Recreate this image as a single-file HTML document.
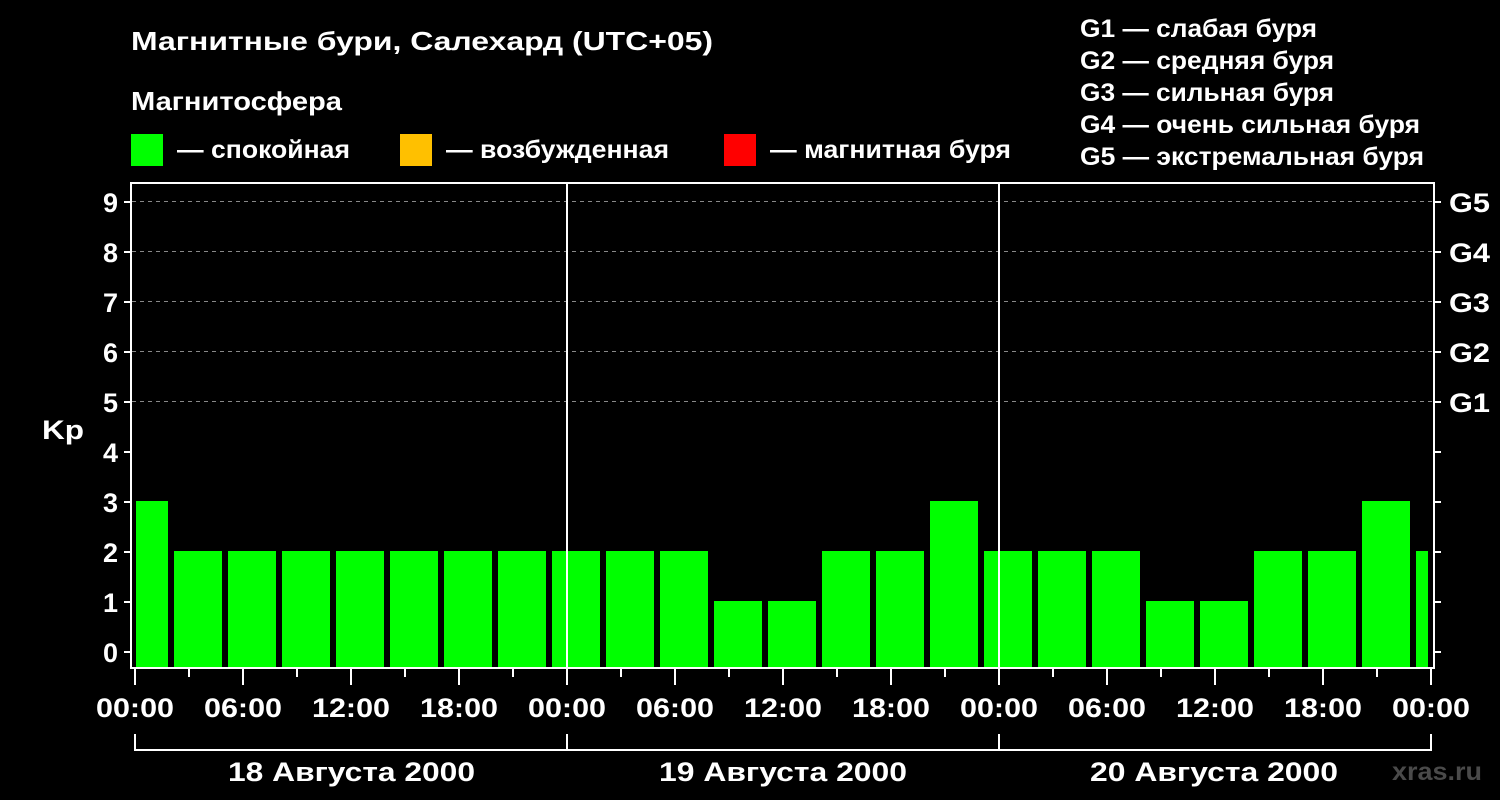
<!DOCTYPE html>
<html><head><meta charset="utf-8"><style>
html,body{margin:0;padding:0;background:#000;width:1500px;height:800px;overflow:hidden}
svg{display:block}
text{font-family:"Liberation Sans",Arial,sans-serif;font-weight:bold;fill:#fff}
</style></head><body>
<svg width="1500" height="800" viewBox="0 0 1500 800" xmlns="http://www.w3.org/2000/svg">
<rect width="1500" height="800" fill="#000"/>
<text x="131" y="50" font-size="26" textLength="582" lengthAdjust="spacingAndGlyphs">Магнитные бури, Салехард (UTC+05)</text>
<text x="131" y="110" font-size="26" textLength="211" lengthAdjust="spacingAndGlyphs">Магнитосфера</text>
<rect x="131" y="134" width="32" height="32" fill="#00ff00"/>
<text x="177" y="158" font-size="25" textLength="173" lengthAdjust="spacingAndGlyphs">— спокойная</text>
<rect x="400" y="134" width="32" height="32" fill="#ffc000"/>
<text x="446" y="158" font-size="25" textLength="223" lengthAdjust="spacingAndGlyphs">— возбужденная</text>
<rect x="724" y="134" width="32" height="32" fill="#ff0000"/>
<text x="770" y="158" font-size="25" textLength="241" lengthAdjust="spacingAndGlyphs">— магнитная буря</text>
<g font-size="25">
<text x="1080" y="37" textLength="237" lengthAdjust="spacingAndGlyphs">G1 — слабая буря</text>
<text x="1080" y="69" textLength="254" lengthAdjust="spacingAndGlyphs">G2 — средняя буря</text>
<text x="1080" y="101" textLength="254" lengthAdjust="spacingAndGlyphs">G3 — сильная буря</text>
<text x="1080" y="133" textLength="340" lengthAdjust="spacingAndGlyphs">G4 — очень сильная буря</text>
<text x="1080" y="165" textLength="344" lengthAdjust="spacingAndGlyphs">G5 — экстремальная буря</text>
</g>
<g stroke="#888" stroke-width="1" stroke-dasharray="4,4">
<line x1="132" y1="201.5" x2="1434" y2="201.5"/>
<line x1="132" y1="251.5" x2="1434" y2="251.5"/>
<line x1="132" y1="301.5" x2="1434" y2="301.5"/>
<line x1="132" y1="351.5" x2="1434" y2="351.5"/>
<line x1="132" y1="401.5" x2="1434" y2="401.5"/>
</g>
<g fill="#00ff00">
<rect x="136" y="501" width="32" height="167"/>
<rect x="174" y="551" width="48" height="117"/>
<rect x="228" y="551" width="48" height="117"/>
<rect x="282" y="551" width="48" height="117"/>
<rect x="336" y="551" width="48" height="117"/>
<rect x="390" y="551" width="48" height="117"/>
<rect x="444" y="551" width="48" height="117"/>
<rect x="498" y="551" width="48" height="117"/>
<rect x="552" y="551" width="48" height="117"/>
<rect x="606" y="551" width="48" height="117"/>
<rect x="660" y="551" width="48" height="117"/>
<rect x="714" y="601" width="48" height="67"/>
<rect x="768" y="601" width="48" height="67"/>
<rect x="822" y="551" width="48" height="117"/>
<rect x="876" y="551" width="48" height="117"/>
<rect x="930" y="501" width="48" height="167"/>
<rect x="984" y="551" width="48" height="117"/>
<rect x="1038" y="551" width="48" height="117"/>
<rect x="1092" y="551" width="48" height="117"/>
<rect x="1146" y="601" width="48" height="67"/>
<rect x="1200" y="601" width="48" height="67"/>
<rect x="1254" y="551" width="48" height="117"/>
<rect x="1308" y="551" width="48" height="117"/>
<rect x="1362" y="501" width="48" height="167"/>
<rect x="1416" y="551" width="12" height="117"/>
</g>
<g stroke="#fff" stroke-width="2" fill="none">
<path d="M131 183 H1434 V668 H131 Z"/>
<line x1="567" y1="183" x2="567" y2="668"/>
<line x1="999" y1="183" x2="999" y2="668"/>
<path d="M124 202H131M124 252H131M124 302H131M124 352H131M124 402H131M124 452H131M124 502H131M124 552H131M124 602H131M124 652H131"/>
<path d="M1434 202H1441M1434 252H1441M1434 302H1441M1434 352H1441M1434 402H1441M1434 452H1441M1434 502H1441M1434 552H1441M1434 602H1441M1434 652H1441"/>
<path d="M135 669V685M189 669V677M243 669V685M297 669V677M351 669V685M405 669V677M459 669V685M513 669V677M567 669V685M621 669V677M675 669V685M729 669V677M783 669V685M837 669V677M891 669V685M945 669V677M999 669V685M1053 669V677M1107 669V685M1161 669V677M1215 669V685M1269 669V677M1323 669V685M1377 669V677M1431 669V685"/>
<path d="M135 734V750H1431V734M567 734V750M999 734V750"/>
</g>
<g font-size="27" text-anchor="end">
<text x="118" y="212">9</text><text x="118" y="262">8</text><text x="118" y="312">7</text><text x="118" y="362">6</text><text x="118" y="412">5</text><text x="118" y="462">4</text><text x="118" y="512">3</text><text x="118" y="562">2</text><text x="118" y="612">1</text><text x="118" y="662">0</text>
</g>
<g font-size="27">
<text x="1449" y="212" textLength="41" lengthAdjust="spacingAndGlyphs">G5</text><text x="1449" y="262" textLength="41" lengthAdjust="spacingAndGlyphs">G4</text><text x="1449" y="312" textLength="41" lengthAdjust="spacingAndGlyphs">G3</text><text x="1449" y="362" textLength="41" lengthAdjust="spacingAndGlyphs">G2</text><text x="1449" y="412" textLength="41" lengthAdjust="spacingAndGlyphs">G1</text>
</g>
<text x="42" y="439" font-size="27" textLength="42" lengthAdjust="spacingAndGlyphs">Kp</text>
<g font-size="27">
<text x="96" y="717" textLength="78" lengthAdjust="spacingAndGlyphs">00:00</text>
<text x="204" y="717" textLength="78" lengthAdjust="spacingAndGlyphs">06:00</text>
<text x="312" y="717" textLength="78" lengthAdjust="spacingAndGlyphs">12:00</text>
<text x="420" y="717" textLength="78" lengthAdjust="spacingAndGlyphs">18:00</text>
<text x="528" y="717" textLength="78" lengthAdjust="spacingAndGlyphs">00:00</text>
<text x="636" y="717" textLength="78" lengthAdjust="spacingAndGlyphs">06:00</text>
<text x="744" y="717" textLength="78" lengthAdjust="spacingAndGlyphs">12:00</text>
<text x="852" y="717" textLength="78" lengthAdjust="spacingAndGlyphs">18:00</text>
<text x="960" y="717" textLength="78" lengthAdjust="spacingAndGlyphs">00:00</text>
<text x="1068" y="717" textLength="78" lengthAdjust="spacingAndGlyphs">06:00</text>
<text x="1176" y="717" textLength="78" lengthAdjust="spacingAndGlyphs">12:00</text>
<text x="1284" y="717" textLength="78" lengthAdjust="spacingAndGlyphs">18:00</text>
<text x="1392" y="717" textLength="78" lengthAdjust="spacingAndGlyphs">00:00</text>
<text x="228" y="781" textLength="247" lengthAdjust="spacingAndGlyphs">18 Августа 2000</text>
<text x="659" y="781" textLength="248" lengthAdjust="spacingAndGlyphs">19 Августа 2000</text>
<text x="1090" y="781" textLength="248" lengthAdjust="spacingAndGlyphs">20 Августа 2000</text>
</g>
<text x="1392" y="780" font-size="25" textLength="90" lengthAdjust="spacingAndGlyphs" style="fill:#4a4a4a">xras.ru</text>
</svg>
</body></html>
